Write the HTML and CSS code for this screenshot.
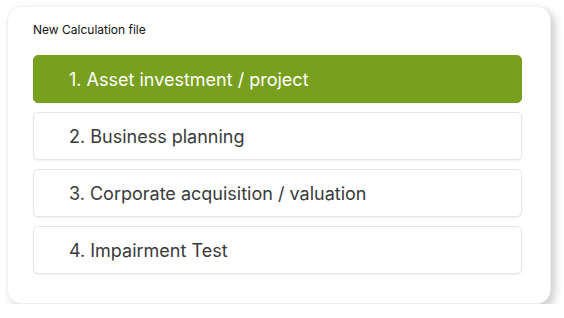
FILE: index.html
```html
<!DOCTYPE html>
<html lang="en">
<head>
    <meta charset="UTF-8">
    <meta name="viewport" content="width=device-width, initial-scale=1.0">
    <title>New Calculation file</title>
    <link rel="stylesheet" href="styles.css">
</head>
<body>

<div class="card">
    <h1 class="title">New Calculation file</h1>
    <div class="options">
        <div class="option active">1. Asset investment / project</div>
        <div class="option">2. Business planning</div>
        <div class="option">3. Corporate acquisition / valuation</div>
        <div class="option">4. Impairment Test</div>
    </div>
</div>

</body>
</html>
```

FILE: styles.css
```css
* {
    box-sizing: border-box;
    margin: 0;
    padding: 0;
}
body {
    font-family: Inter, "Noto Sans", sans-serif;
    background: #ffffff;
    padding: 6px 0 0 7px;
}
.card {
    width: 544px;
    height: 298px;
    background: #fff;
    border-radius: 14px;
    border: 1px solid #f0f0f0;
    box-shadow: 4px 4px 9px rgba(0, 0, 0, 0.2);
    padding: 15px 28px 30px 25px;
}
.title {
    font-size: 12px;
    font-weight: 400;
    color: #111;
    line-height: 16px;
    margin-bottom: 17px;
}
.options {
    display: flex;
    flex-direction: column;
    gap: 9px;
}
.option {
    height: 48px;
    display: flex;
    align-items: center;
    padding-left: 35px;
    font-size: 18px;
    color: #3a3a3a;
    background: #fff;
    border: 1px solid #e6e6e6;
    border-radius: 5px;
    box-shadow: 0 1px 2px rgba(0, 0, 0, 0.06);
    cursor: pointer;
}
.option.active {
    background: #78a01e;
    border-color: #78a01e;
    color: #fff;
}
```
